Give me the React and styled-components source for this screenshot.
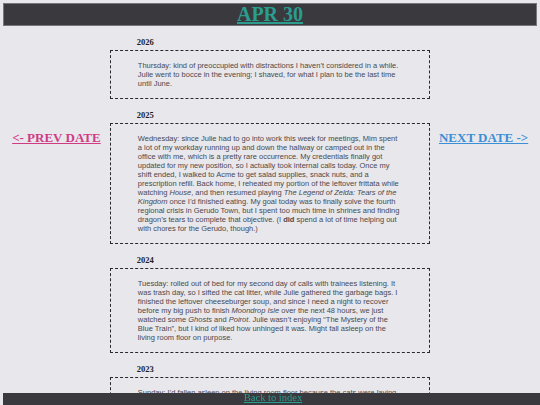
import styled, { createGlobalStyle } from 'styled-components';

const GlobalStyle = createGlobalStyle`
  body {
    margin: 3px;
    background-color: #e8e7ec;
    font-family: "Liberation Serif", "Times New Roman", serif;
  }
`;

const Header = styled.div`
  background-color: #3a393e;
  border: 1px solid #77767b;
  text-align: center;
  height: 21px;
  font-size: 20px;
  line-height: 21px;
`;

const Title = styled.a`
  font-family: "Liberation Serif", serif;
  font-size: 20px;
  font-weight: bold;
  color: #2a9d8f;
  text-decoration: underline;
`;

const Main = styled.div`
  display: grid;
  grid-template-columns: 20% 60% 20%;
  padding-bottom: 40px;
`;

const Side = styled.div`
  text-align: center;
  padding-top: 104px;
  font-size: 13px;
  line-height: 15px;
`;

const NavLink = styled.a`
  font-family: "Liberation Serif", serif;
  font-weight: bold;
  color: ${(p) => p.$color};
  text-decoration: underline;
`;

const Entries = styled.div`
  display: flex;
  flex-direction: column;
`;

const Year = styled.h3`
  margin: 11px 0 3px 27px;
  font-size: 8.5px;
  line-height: 10px;
  font-weight: bold;
  color: #1e1e22;
`;

const EntryBox = styled.div`
  border: 1px dashed #2a2a2e;
  padding: 10px 27px;
  font-family: "Liberation Sans", Arial, sans-serif;
  font-size: 7.5px;
  line-height: 9px;
  color: #4a494e;
`;

const Footer = styled.div`
  position: fixed;
  bottom: 0;
  left: 3px;
  width: 100%;
  height: 12px;
  background-color: #3a393e;
  text-align: center;
  font-size: 10.5px;
  line-height: 10px;
`;

const FooterLink = styled.a`
  font-family: "Liberation Serif", serif;
  color: #2a9d8f;
  text-decoration: underline;
`;

const entries = [
  {
    year: 2026,
    body: (
      <>
        Thursday: kind of preoccupied with distractions I haven’t considered in a while.
        Julie went to bocce in the evening; I shaved, for what I plan to be the last time
        until June.
      </>
    ),
  },
  {
    year: 2025,
    body: (
      <>
        Wednesday: since Julie had to go into work this week for meetings, Mim spent a lot
        of my workday running up and down the hallway or camped out in the office with me,
        which is a pretty rare occurrence. My credentials finally got updated for my new
        position, so I actually took internal calls today. Once my shift ended, I walked to
        Acme to get salad supplies, snack nuts, and a prescription refill. Back home, I
        reheated my portion of the leftover frittata while watching <i>House</i>, and then
        resumed playing <i>The Legend of Zelda: Tears of the Kingdom</i> once I’d finished
        eating. My goal today was to finally solve the fourth regional crisis in Gerudo
        Town, but I spent too much time in shrines and finding dragon’s tears to complete
        that objective. (I <b>did</b> spend a lot of time helping out with chores for the
        Gerudo, though.)
      </>
    ),
  },
  {
    year: 2024,
    body: (
      <>
        Tuesday: rolled out of bed for my second day of calls with trainees listening. It
        was trash day, so I sifted the cat litter, while Julie gathered the garbage bags. I
        finished the leftover cheeseburger soup, and since I need a night to recover before
        my big push to finish <i>Moondrop Isle</i> over the next 48 hours, we just watched
        some <i>Ghosts</i> and <i>Poirot</i>. Julie wasn’t enjoying “The Mystery of the Blue
        Train”, but I kind of liked how unhinged it was. Might fall asleep on the living
        room floor on purpose.
      </>
    ),
  },
  {
    year: 2023,
    body: (
      <>
        Sunday: I’d fallen asleep on the living room floor because the cats were laying
        on me, and woke up stiff around dawn. Spent the afternoon cleaning up the yard and
        the evening reading on the couch.
      </>
    ),
  },
];

function App() {
  return (
    <div>
      <GlobalStyle />
      <Header>
        <Title href="#">APR 30</Title>
      </Header>
      <Main>
        <Side>
          <NavLink href="#" $color="#d03c84">&lt;- PREV DATE</NavLink>
        </Side>
        <Entries>
          {entries.map((entry) => (
            <div key={entry.year}>
              <Year>{entry.year}</Year>
              <EntryBox>{entry.body}</EntryBox>
            </div>
          ))}
        </Entries>
        <Side>
          <NavLink href="#" $color="#3b8fd4">NEXT DATE -&gt;</NavLink>
        </Side>
      </Main>
      <Footer>
        <FooterLink href="#">Back to index</FooterLink>
      </Footer>
    </div>
  );
}

export default App;
